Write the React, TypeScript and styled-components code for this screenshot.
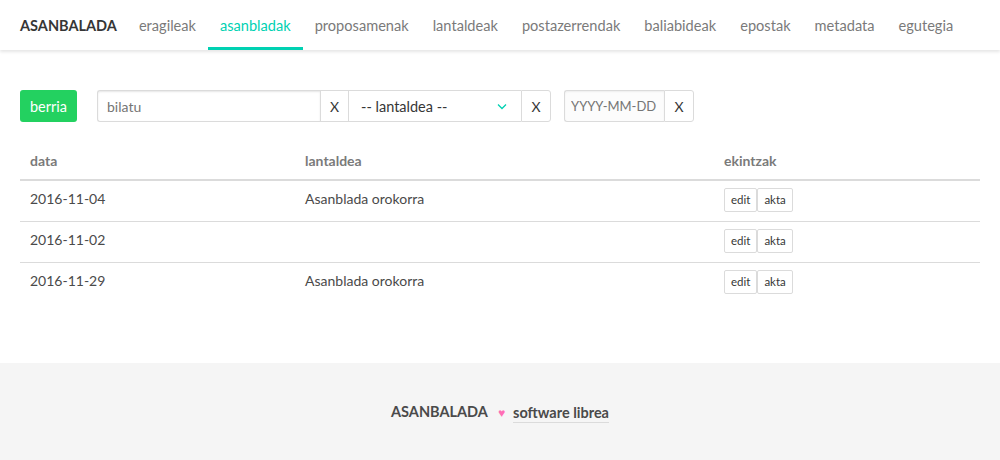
import React from "react";
import styled, { createGlobalStyle } from "styled-components";

const GlobalStyle = createGlobalStyle`
  html, body {
    margin: 0;
    padding: 0;
    background: #ffffff;
    font-family: Lato, "Open Sans", sans-serif;
    color: #4a4a4a;
    font-size: 14px;
  }
  * {
    box-sizing: border-box;
  }
`;

const navItems = [
  "eragileak",
  "asanbladak",
  "proposamenak",
  "lantaldeak",
  "postazerrendak",
  "baliabideak",
  "epostak",
  "metadata",
  "egutegia",
];

const rows = [
  { date: "2016-11-04", group: "Asanblada orokorra" },
  { date: "2016-11-02", group: "" },
  { date: "2016-11-29", group: "Asanblada orokorra" },
];

const App = () => {
  return (
    <Page>
      <GlobalStyle />
      <Nav>
        <Brand>ASANBALADA</Brand>
        {navItems.map((item) => (
          <NavItem key={item} active={item === "asanbladak"}>
            {item}
          </NavItem>
        ))}
      </Nav>

      <Main>
        <Filters>
          <NewButton>berria</NewButton>
          <Group>
            <SearchInput placeholder="bilatu" />
            <ClearButton>X</ClearButton>
            <SelectBox>
              <span>-- lantaldea --</span>
              <svg width="10" height="7" viewBox="0 0 10 7">
                <path
                  d="M1 1.5 L5 5.5 L9 1.5"
                  fill="none"
                  stroke="#00d1b2"
                  strokeWidth="1.3"
                />
              </svg>
            </SelectBox>
            <ClearButton last>X</ClearButton>
          </Group>
          <Group>
            <DateInput placeholder="YYYY-MM-DD" />
            <ClearButton last>X</ClearButton>
          </Group>
        </Filters>

        <Table>
          <thead>
            <tr>
              <Th width={275}>data</Th>
              <Th width={419}>lantaldea</Th>
              <Th>ekintzak</Th>
            </tr>
          </thead>
          <tbody>
            {rows.map((row, i) => (
              <Tr key={i} last={i === rows.length - 1}>
                <Td>{row.date}</Td>
                <Td>{row.group}</Td>
                <Td>
                  <Actions>
                    <SmallButton>edit</SmallButton>
                    <SmallButton>akta</SmallButton>
                  </Actions>
                </Td>
              </Tr>
            ))}
          </tbody>
        </Table>
      </Main>

      <Footer>
        <FooterBrand>ASANBALADA</FooterBrand>
        <Heart>♥</Heart>
        <FooterLink>software librea</FooterLink>
      </Footer>
    </Page>
  );
};

export default App;

const Page = styled.div`
  min-height: 460px;
  display: flex;
  flex-direction: column;
`;

const Nav = styled.nav`
  height: 50px;
  display: flex;
  align-items: stretch;
  padding-left: 8px;
  box-shadow: 0 2px 3px rgba(10, 10, 10, 0.1);
  background: #fff;
`;

const Brand = styled.div`
  display: flex;
  align-items: center;
  padding: 0 10px 0 12px;
  font-weight: 700;
  color: #363636;
  font-size: 14.5px;
`;

const NavItem = styled.a<{ active?: boolean }>`
  display: flex;
  align-items: center;
  padding: 0 12px;
  font-size: 14.6px;
  color: ${(p) => (p.active ? "#00d1b2" : "#7a7a7a")};
  border-bottom: 3px solid ${(p) => (p.active ? "#00d1b2" : "transparent")};
  border-top: 3px solid transparent;
  cursor: pointer;
`;

const Main = styled.main`
  padding: 40px 20px 60px;
`;

const Filters = styled.div`
  display: flex;
  align-items: center;
  gap: 13px;
  margin-bottom: 18px;
`;

const NewButton = styled.button`
  height: 32px;
  padding: 0 10px;
  border: none;
  border-radius: 3px;
  background: #23d160;
  color: #fff;
  font-family: inherit;
  font-size: 14.5px;
  margin-right: 7px;
`;

const Group = styled.div`
  display: flex;
  height: 32px;
`;

const SearchInput = styled.input`
  width: 223px;
  height: 32px;
  border: 1px solid #dbdbdb;
  border-right: none;
  border-radius: 3px 0 0 3px;
  padding: 0 9px;
  font-family: inherit;
  font-size: 14px;
  color: #363636;
  box-shadow: inset 0 1px 2px rgba(10, 10, 10, 0.1);
  outline: none;

  ::placeholder {
    color: #b5b5b5;
  }
`;

const DateInput = styled(SearchInput)`
  width: 100px;
  padding: 0 5px 0 6px;
  font-size: 13px;
  background: #fcfcfc;
  box-shadow: inset 0 1px 2px rgba(10, 10, 10, 0.06);
`;

const ClearButton = styled.button<{ last?: boolean }>`
  width: ${(p) => (p.last ? "30px" : "28px")};
  height: 32px;
  border: 1px solid #dbdbdb;
  border-right: ${(p) => (p.last ? "1px solid #dbdbdb" : "none")};
  border-radius: ${(p) => (p.last ? "0 3px 3px 0" : "0")};
  background: #fff;
  color: #363636;
  font-family: inherit;
  font-size: 14px;
  padding: 0;
`;

const SelectBox = styled.div`
  width: 173px;
  height: 32px;
  border: 1px solid #dbdbdb;
  border-right: none;
  display: flex;
  align-items: center;
  justify-content: space-between;
  padding: 0 14px 0 12px;
  color: #363636;
  font-size: 14.5px;
`;

const Table = styled.table`
  width: 960px;
  border-collapse: collapse;
`;

const Th = styled.th<{ width?: number }>`
  width: ${(p) => (p.width ? `${p.width}px` : "auto")};
  text-align: left;
  padding: 10px 10px 9px;
  height: 40px;
  font-weight: 700;
  color: #7a7a7a;
  border-bottom: 2px solid #dbdbdb;
`;

const Tr = styled.tr<{ last?: boolean }>`
  td {
    border-bottom: ${(p) => (p.last ? "none" : "1px solid #dbdbdb")};
  }
`;

const Td = styled.td`
  height: 41px;
  padding: 0 10px 4px;
  vertical-align: middle;
  color: #4a4a4a;
`;

const Actions = styled.div`
  display: flex;
  padding-top: 2px;
`;

const SmallButton = styled.button`
  height: 24px;
  padding: 0 6px;
  border: 1px solid #dbdbdb;
  border-radius: 2px;
  background: #fff;
  color: #363636;
  font-family: inherit;
  font-size: 11.5px;
`;

const Footer = styled.footer`
  flex: 1;
  background: #f5f5f5;
  display: flex;
  justify-content: center;
  align-items: flex-start;
  padding-top: 40px;
  font-weight: 700;
  font-size: 14.5px;
  gap: 8px;
`;

const FooterBrand = styled.span`
  color: #4a4a4a;
  margin-right: 2px;
`;

const Heart = styled.span`
  color: #ff6eb4;
  font-size: 12px;
  line-height: 20px;
`;

const FooterLink = styled.a`
  color: #4a4a4a;
  border-bottom: 1px solid #dbdbdb;
  line-height: 19px;
`;
